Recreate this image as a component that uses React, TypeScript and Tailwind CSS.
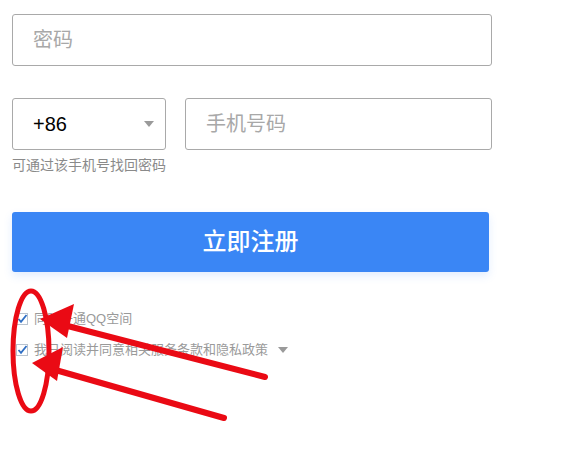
const CheckIcon = () => (
  <svg width="12" height="12" viewBox="0 0 12 12" className="shrink-0">
    <rect x="0.5" y="0.5" width="11" height="11" fill="#fff" stroke="#b9c3cf" />
    <path d="M2.5 6 L5 8.8 L10.5 2" fill="none" stroke="#2f6fc4" strokeWidth="1.8" />
  </svg>
);

const Caret = ({ className = "" }: { className?: string }) => (
  <svg width="10" height="6" viewBox="0 0 10 6" className={className}>
    <path d="M0 0 H10 L5 6 Z" fill="#9a9a9a" />
  </svg>
);

export default function App() {
  return (
    <div
      className="relative w-[571px] h-[450px] bg-white overflow-hidden"
      style={{ fontFamily: '"Liberation Sans", "Noto Sans CJK SC", sans-serif' }}
    >
      <div className="w-[480px] ml-3 pt-[14px]">
        <div className="h-[52px] border border-[#a9a9a9] rounded-[3px] flex items-center pl-5 text-[20px] leading-[24px] text-[#a8a8a8]">
          密码
        </div>

        <div className="mt-[32px] flex gap-[19px]">
          <div className="w-[154px] h-[52px] border border-[#a9a9a9] rounded-[3px] flex items-center justify-between pl-[20px] pr-[11px]">
            <span className="text-[20px] leading-[24px] text-black">+86</span>
            <Caret />
          </div>
          <div className="flex-1 h-[52px] border border-[#a9a9a9] rounded-[3px] flex items-center pl-5 text-[20px] leading-[24px] text-[#a8a8a8]">
            手机号码
          </div>
        </div>

        <p className="mt-[5px] text-[14px] leading-[20px] text-[#8a8a8a]">可通过该手机号找回密码</p>

        <button className="mt-[37px] w-[477px] h-[60px] rounded-[3px] bg-[#3a86f5] text-white text-[24px] leading-[30px] font-medium shadow-[0_4px_8px_rgba(58,134,245,0.15)]">
          立即注册
        </button>

        <div className="mt-[37px] flex flex-col gap-[11px] pl-1 text-[13px] leading-[20px] text-[#9a9a9a]">
          <label className="flex items-center gap-[6px]">
            <CheckIcon />
            <span>同时开通QQ空间</span>
          </label>
          <label className="flex items-center gap-[6px]">
            <CheckIcon />
            <span>我已阅读并同意相关服务条款和隐私政策</span>
            <Caret className="ml-[4px]" />
          </label>
        </div>
      </div>

      {/* red annotation drawn over the form */}
      <svg className="absolute inset-0 pointer-events-none" width="571" height="450" viewBox="0 0 571 450">
        <ellipse cx="31" cy="351" rx="18" ry="60" fill="none" stroke="#ea0a14" strokeWidth="5" />
        <line x1="265" y1="377" x2="60" y2="324" stroke="#ea0a14" strokeWidth="6" strokeLinecap="round" />
        <polygon points="40,319 74,304 67,338" fill="#ea0a14" />
        <line x1="224" y1="418" x2="52" y2="369" stroke="#ea0a14" strokeWidth="6" strokeLinecap="round" />
        <polygon points="32,363 63,347 57,381" fill="#ea0a14" />
      </svg>
    </div>
  );
}
